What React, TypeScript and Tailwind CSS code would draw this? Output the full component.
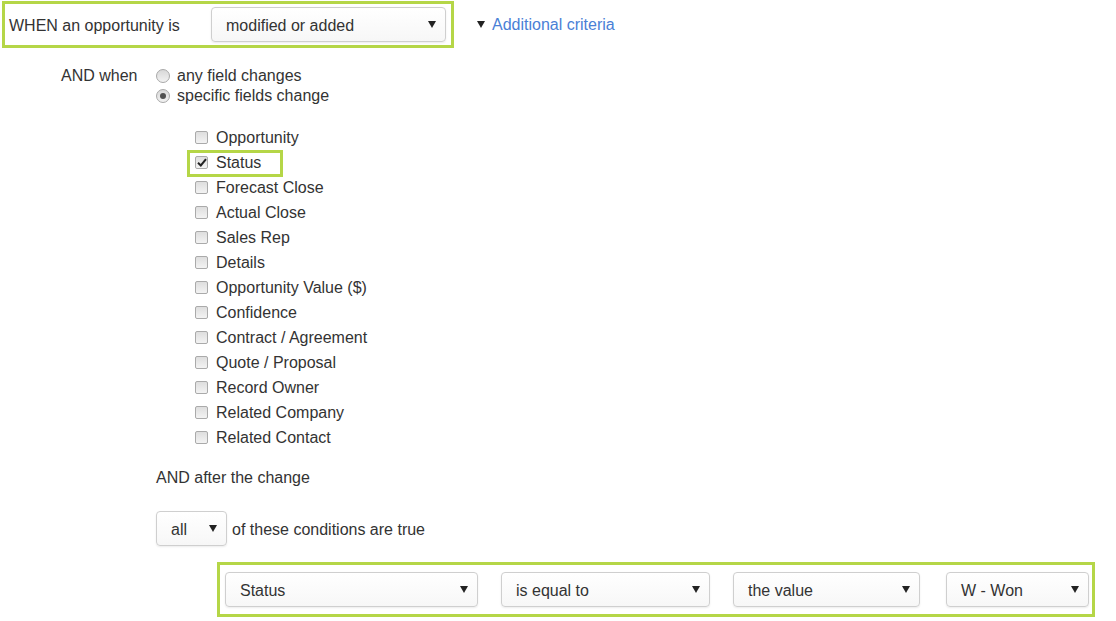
import React from "react"

const fields = [
  "Opportunity",
  "Status",
  "Forecast Close",
  "Actual Close",
  "Sales Rep",
  "Details",
  "Opportunity Value ($)",
  "Confidence",
  "Contract / Agreement",
  "Quote / Proposal",
  "Record Owner",
  "Related Company",
  "Related Contact",
]

function Caret() {
  return (
    <svg width="8" height="7" viewBox="0 0 8 7" className="shrink-0">
      <polygon points="0,0 8,0 4,7" fill="#222" />
    </svg>
  )
}

function Select({ value, className }: { value: string; className: string }) {
  return (
    <div
      className={
        "flex h-[35px] items-center justify-between rounded-[4px] border border-[#cfcfcf] bg-gradient-to-b from-white to-[#f7f7f7] pl-[14px] pr-[9px] shadow-[0_1px_2px_rgba(0,0,0,0.08)] " +
        className
      }
    >
      <span className="pt-[2px]">{value}</span>
      <Caret />
    </div>
  )
}

function Radio({ checked }: { checked?: boolean }) {
  return (
    <span className="flex h-[14px] w-[14px] items-center justify-center rounded-full border border-[#a8a8a8] bg-gradient-to-b from-[#d8d8d8] to-[#f2f2f2]">
      {checked && <span className="h-[6px] w-[6px] rounded-full bg-[#505050]" />}
    </span>
  )
}

function Checkbox({ checked }: { checked?: boolean }) {
  return (
    <span className="flex h-[13px] w-[13px] items-center justify-center rounded-[2px] border border-[#aaa] bg-gradient-to-b from-[#dedede] to-[#f3f3f3]">
      {checked && (
        <svg width="10" height="9" viewBox="0 0 10 9">
          <path d="M1 4.8 L3.8 7.5 L9 1.2" fill="none" stroke="#222" strokeWidth="2" />
        </svg>
      )}
    </span>
  )
}

export default function App() {
  return (
    <div className="h-[621px] w-[1116px] overflow-hidden bg-white font-['Liberation_Sans',Arial,sans-serif] text-[16px] text-[#333]">
      <div className="flex items-center">
        <div className="ml-[2px] mt-[1px] flex h-[47px] w-[452px] items-center border-[3px] border-[#b5d647] pl-[4px]">
          <span className="w-[202px] pt-[2px]">WHEN an opportunity is</span>
          <Select value="modified or added" className="w-[235px]" />
        </div>
        <div className="ml-[23px] flex items-center gap-[7px] text-[#4a80d6]">
          <Caret />
          <span className="pt-[2px]">Additional criteria</span>
        </div>
      </div>

      <div className="mt-[18px] flex pl-[61px] leading-[20px]">
        <span className="w-[95px]">AND when</span>
        <div className="flex flex-col">
          <label className="flex items-center gap-[7px]">
            <Radio />
            <span>any field changes</span>
          </label>
          <label className="flex items-center gap-[7px]">
            <Radio checked />
            <span>specific fields change</span>
          </label>
        </div>
      </div>

      <div className="mt-[19px] flex flex-col pl-[195px]">
        {fields.map((f) => (
          <div key={f} className="relative flex h-[25px] items-center gap-[8px]">
            <Checkbox checked={f === "Status"} />
            <span>{f}</span>
            {f === "Status" && (
              <span className="absolute left-[-8px] top-0 h-[27px] w-[96px] border-[3px] border-[#b5d647]" />
            )}
          </div>
        ))}
      </div>

      <div className="mt-[18px] pl-[156px] leading-[20px]">AND after the change</div>

      <div className="mt-[23px] flex items-center gap-[5px] pl-[156px]">
        <Select value="all" className="w-[71px]" />
        <span className="pt-[2px]">of these conditions are true</span>
      </div>

      <div className="ml-[217px] mt-[16px] flex h-[55px] w-[878px] items-center border-[3px] border-[#b5d647] pl-[5px]">
        <Select value="Status" className="w-[253px]" />
        <Select value="is equal to" className="ml-[23px] w-[209px]" />
        <Select value="the value" className="ml-[23px] w-[187px]" />
        <Select value="W - Won" className="ml-[26px] w-[143px]" />
      </div>
    </div>
  )
}
